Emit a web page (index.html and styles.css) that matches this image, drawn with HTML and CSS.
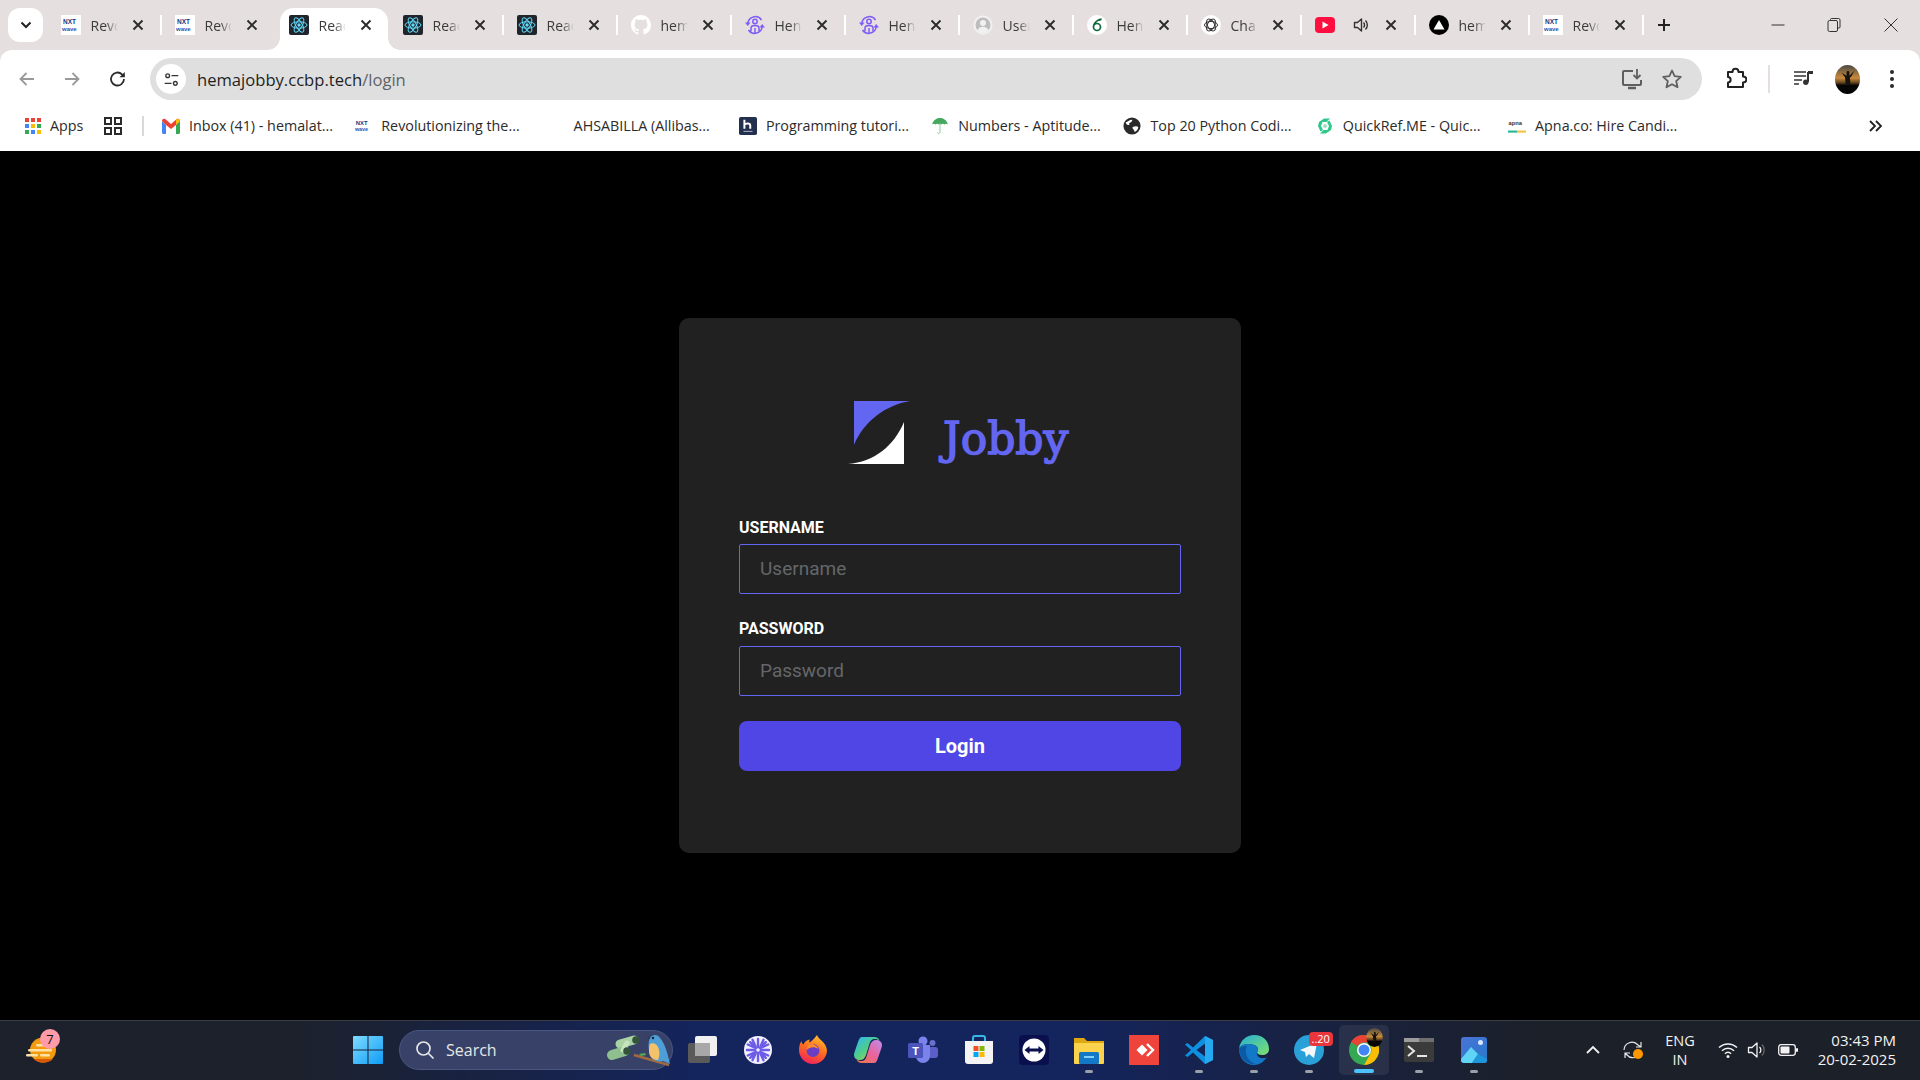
FILE: index.html
```html
<!DOCTYPE html>
<html lang="en">
<head>
<meta charset="utf-8">
<title>Jobby Login</title>
<link rel="stylesheet" href="styles.css">
</head>
<body>
<svg class="sprite" aria-hidden="true">
  <defs>
    <symbol id="i-close" viewBox="0 0 14 14"><path d="M2.500 2.500l9 9M11.500 2.500l-9 9" fill="none" stroke="#2b2b2b" stroke-width="1.900"/></symbol>
    <symbol id="i-nxt" viewBox="0 0 20 20"><rect width="20" height="20" fill="#fff"/><text x="2" y="9" font-family="Liberation Sans" font-weight="700" font-size="6.500" fill="#17387f">NXT</text><text x="1" y="15.500" font-family="Liberation Sans" font-weight="700" font-size="6" fill="#2456b8">wave</text></symbol>
    <symbol id="i-react" viewBox="0 0 20 20"><rect width="20" height="20" rx="2" fill="#20252b"/><g fill="none" stroke="#61dafb" stroke-width="1"><ellipse cx="10" cy="10" rx="8" ry="3.200"/><ellipse cx="10" cy="10" rx="8" ry="3.200" transform="rotate(60 10 10)"/><ellipse cx="10" cy="10" rx="8" ry="3.200" transform="rotate(120 10 10)"/></g><circle cx="10" cy="10" r="1.700" fill="#61dafb"/></symbol>
    <symbol id="i-github" viewBox="0 0 16 16"><path fill="#fff" d="M8 0C3.580 0 0 3.580 0 8c0 3.540 2.290 6.530 5.470 7.590.4.070.55-.17.55-.38 0-.19-.01-.82-.01-1.490-2.010.37-2.530-.49-2.690-.94-.09-.23-.48-.94-.82-1.130-.28-.15-.68-.52-.01-.53.63-.01 1.080.58 1.230.82.72 1.210 1.870.87 2.330.66.07-.52.28-.87.51-1.070-1.780-.2-3.640-.89-3.640-3.950 0-.87.31-1.590.82-2.150-.08-.2-.36-1.020.08-2.120 0 0 .67-.21 2.200.82.64-.18 1.320-.27 2-.27.68 0 1.360.09 2 .27 1.530-1.040 2.200-.82 2.200-.82.44 1.100.16 1.920.08 2.120.51.56.82 1.270.82 2.150 0 3.070-1.870 3.750-3.650 3.950.29.25.54.73.54 1.480 0 1.070-.01 1.930-.01 2.200 0 .21.15.46.55.38A8.013 8.013 0 0016 8c0-4.420-3.580-8-8-8z"/></symbol>
    <symbol id="i-hero" viewBox="0 0 20 20"><g fill="none" stroke="#7d5cf5" stroke-width="1.500"><path d="M2.800 8.500A7.500 7.500 0 0 1 16.500 5"/><path d="M17.200 11.500A7.500 7.500 0 0 1 3.500 15"/><circle cx="10" cy="6.500" r="2.200"/><path d="M6 16.500v-3.500c0-1.700 1.700-2.500 4-2.500s4 .8 4 2.500v3.500"/><path d="M10 13v5"/></g><path d="M0 7.500h5.500L2.800 11zM20 12.500h-5.500L17.200 9z" fill="#7d5cf5"/></symbol>
    <symbol id="i-user" viewBox="0 0 20 20"><circle cx="10" cy="10" r="9.500" fill="#f1f1f1"/><circle cx="10" cy="10" r="7.500" fill="#bdbdbd"/><circle cx="10" cy="8" r="3" fill="#f1f1f1"/><path d="M4.500 15.500c1-3 3-3.800 5.500-3.800s4.500.8 5.500 3.800a7.500 7.500 0 0 1-11 0z" fill="#f1f1f1"/></symbol>
    <symbol id="i-leaf" viewBox="0 0 20 20"><circle cx="10" cy="10" r="10" fill="#fff"/><path d="M11.500 5C8 7 6.500 9.500 6.500 12a3.500 3.500 0 1 0 3.500-3.500c-1 0-2 .4-2.800 1.200" fill="none" stroke="#0f6a3c" stroke-width="1.700"/><path d="M10 5.500c1.200-1.800 3-2.300 5-2-.3 2-2 3.300-5 2z" fill="#0f6a3c"/></symbol>
    <symbol id="i-gpt" viewBox="0 0 20 20"><circle cx="10" cy="10" r="10" fill="#fff"/><g fill="none" stroke="#333" stroke-width="1"><ellipse cx="10" cy="10" rx="6.500" ry="3.600"/><ellipse cx="10" cy="10" rx="6.500" ry="3.600" transform="rotate(60 10 10)"/><ellipse cx="10" cy="10" rx="6.500" ry="3.600" transform="rotate(120 10 10)"/></g></symbol>
    <symbol id="i-yt" viewBox="0 0 20 16"><rect width="20" height="16" rx="4" fill="#ff0f3f"/><path d="M7.500 4.500l6 3.500-6 3.500z" fill="#fff"/></symbol>
    <symbol id="i-audio" viewBox="0 0 16 16"><path d="M1.500 5.500h3l4-3.500v12l-4-3.500h-3z" fill="none" stroke="#333" stroke-width="1.400" stroke-linejoin="round"/><path d="M10.500 5.500a3.500 3.500 0 0 1 0 5M12.500 3.500a6.500 6.500 0 0 1 0 9" fill="none" stroke="#333" stroke-width="1.400"/></symbol>
    <symbol id="i-vercel" viewBox="0 0 20 20"><circle cx="10" cy="10" r="10" fill="#000"/><path d="M10 5l5.500 9.500h-11z" fill="#fff"/></symbol>

    <symbol id="i-gmail" viewBox="0 0 18 16"><path d="M0 3v11.500C0 15.300.7 16 1.500 16H4V7z" fill="#4285f4"/><path d="M14 7v9h2.500c.8 0 1.500-.7 1.500-1.500V3z" fill="#34a853"/><path d="M0 3l4 4 5 4 5-4 4-4C18 1 16 .2 14.800 1.100L9 6 3.200 1.100C2 .2 0 1 0 3z" fill="#ea4335"/><path d="M14 2v5l4-4c0-1.700-1.800-2.700-3.200-1.900z" fill="#fbbc04"/></symbol>
    <symbol id="i-hackr" viewBox="0 0 20 20"><rect width="20" height="20" rx="2" fill="#232f4e"/><path d="M6 3v10M6 8.500c1-1.500 6.500-2.500 6.500 1V13" fill="none" stroke="#fff" stroke-width="2.200"/><path d="M5 16h10" stroke="#aab" stroke-width="1.200"/></symbol>
    <symbol id="i-umbrella" viewBox="0 0 18 18"><path d="M1 7.500C2.500 2.500 6 1 9 1s6.500 1.500 8 6.500c-1-1-2.500-1-3.300 0-.9-1-2.600-1-3.500 0-.7-.7-1.700-.7-2.400 0-.9-1-2.600-1-3.500 0C3.500 6.500 2 6.500 1 7.500z" fill="#45a85c"/><path d="M9 6v9c0 2-2.500 2-2.500.3" fill="none" stroke="#8fcb9f" stroke-width="1"/></symbol>
    <symbol id="i-globe" viewBox="0 0 20 20"><circle cx="10" cy="10" r="9.500" fill="#2a2a2a"/><path d="M3 6c2-.5 4-3 7-3 1 1-1 3-2.500 3.500S8 9 6.500 9 3.500 8 3 6zM11 11c2-1 5-1 6 0 0 2.500-2 4.500-3.500 5.500-1 0-1-2-2-3s-1.500-2-.5-2.500z" fill="#fff"/></symbol>
    <symbol id="i-quick" viewBox="0 0 18 18"><path d="M3 5l5-3.500h6L10.500 5H6.500L5 9l2 4-2.500 1.500L2 9z" fill="#2fc78a"/><path d="M15 13l-5 3.500H4L7.500 13h4L13 9l-2-4 2.500-1.500L16 9z" fill="#2fc78a"/><circle cx="9" cy="9" r="2" fill="#9ee2c4"/></symbol>
    <symbol id="i-apna" viewBox="0 0 20 20"><text x="0.500" y="9" font-family="Liberation Sans" font-weight="700" font-size="6.400" fill="#333">apna</text><rect y="15" width="10" height="2.400" fill="#2bb793"/><rect x="10" y="15" width="10" height="2.400" fill="#f5c443"/></symbol>

    <symbol id="i-win" viewBox="0 0 30 30"><defs><linearGradient id="g-win" x1="0" y1="0" x2="1" y2="1"><stop offset="0" stop-color="#7fdcff"/><stop offset="1" stop-color="#0f9cf5"/></linearGradient></defs><path d="M1 1h13.500v13.500H0V2a1 1 0 0 1 1-1zM15.500 1H29a1 1 0 0 1 1 1v12.500H15.500zM0 15.500h14.500V29H1a1 1 0 0 1-1-1zM15.500 15.500H30V28a1 1 0 0 1-1 1H15.500z" fill="url(#g-win)"/></symbol>
    <symbol id="i-weather" viewBox="0 0 30 26"><ellipse cx="17" cy="13" rx="13" ry="12.500" fill="#f59a0c"/><path d="M8 22c4 5 14 5 19 0z" fill="#d9590a"/><g fill="#fbe3a8"><rect x="10" y="7" width="18" height="2.500" rx="1.200"/><rect x="2" y="12" width="24" height="2.500" rx="1.200"/><rect x="0" y="17" width="12" height="2.500" rx="1.200"/><rect x="14" y="17" width="10" height="2.500" rx="1.200"/></g></symbol>
    <symbol id="i-bird" viewBox="0 0 70 36"><g fill="none" stroke-linecap="round"><path d="M31 8L17 12" stroke="#a9d3a4" stroke-width="9"/><path d="M22 19L9 23" stroke="#8fbf8e" stroke-width="10"/><path d="M24 11L20 18" stroke="#c6e4c0" stroke-width="5"/></g><circle cx="33" cy="8" r="3.800" fill="#34523c"/><circle cx="24" cy="19" r="3.800" fill="#34523c"/><path d="M31 23l35 10" stroke="#a4683f" stroke-width="2.500"/><path d="M36 22l6-1 1 2-5 1z" fill="#4caf50"/><path d="M47 6c2-4 8-4 10 0 5 5 8 17 10 26l-7-3c-7 2-13-2-14-10-.5-4-1-9 1-13z" fill="#4d9ed6"/><path d="M47 12c4-2 8 1 9 6 1 4 0 8-1 10-5 0-9-3-9-9 0-3 0-5 1-7z" fill="#f3c26b"/><circle cx="50" cy="6" r="1.200" fill="#10202c"/><path d="M47 5l-4 1 4 1z" fill="#2b3b44"/></symbol>
    <symbol id="i-taskview" viewBox="0 0 30 30"><rect y="8" width="22" height="20" rx="2" fill="#5a5a5a"/><rect x="7" y="1" width="22" height="20" rx="2" fill="#f1f1f1"/><rect x="7" y="8" width="15" height="13" fill="#a8a8a8"/></symbol>
    <symbol id="i-flower" viewBox="0 0 30 30"><circle cx="15" cy="15" r="14" fill="#f3f0ff"/><g stroke="#6c5ce7" stroke-width="2.400" stroke-linecap="round"><path d="M15 4v7M15 19v7M4 15h7M19 15h7M7.200 7.200l5 5M17.800 17.800l5 5M22.800 7.200l-5 5M12.200 17.800l-5 5M9.500 4.800l3 6.500M17.500 18.700l3 6.500M20.500 4.800l-3 6.500M12.500 18.700l-3 6.500M4.800 9.500l6.500 3M18.700 17.500l6.500 3M25.200 9.500l-6.500 3M11.300 17.500l-6.500 3"/></g><circle cx="15" cy="15" r="3.500" fill="#6c5ce7"/><circle cx="15" cy="15" r="1.800" fill="#f3f0ff"/></symbol>
    <symbol id="i-firefox" viewBox="0 0 30 30"><defs><linearGradient id="g-ff" x1="0.700" y1="0" x2="0.300" y2="1"><stop offset="0" stop-color="#ffbd2e"/><stop offset="0.500" stop-color="#ff6a1f"/><stop offset="1" stop-color="#f0205f"/></linearGradient></defs><path d="M19 0c1 4 9 7 10 15a14 14 0 1 1-28 0C1 11 2 8 3.500 6c0 2 1 3 2 3.500C7 6 9 5 12 4.500c-1 1.500-1 2.500-.5 3 2-1 4-3 7.500-7.500z" fill="url(#g-ff)"/><circle cx="15" cy="15.500" r="6.500" fill="#6a3fc4"/><path d="M8.500 15c3-3 8-4 12-1-1-3-4-5-7-5s-5 3-5 6z" fill="#ff8a2b"/></symbol>
    <symbol id="i-copilot" viewBox="0 0 30 30"><defs><linearGradient id="g-co1" x1="0" y1="0" x2="1" y2="1"><stop offset="0" stop-color="#2fb5ff"/><stop offset="0.500" stop-color="#4fcf84"/><stop offset="1" stop-color="#f6c944"/></linearGradient><linearGradient id="g-co2" x1="1" y1="0" x2="0" y2="1"><stop offset="0" stop-color="#c08cf0"/><stop offset="0.500" stop-color="#e8649a"/><stop offset="1" stop-color="#f07a3a"/></linearGradient></defs><path d="M9 2h12c3 0 5 1.500 5.500 4-1-1.500-3-2-5-2-2.500 0-4 1.500-5 4.500L13 20c-1 3-3 5-6 5-3.500 0-6-2-6-5 0-1 .2-2 .6-3L5 7c1-3 2-5 4-5z" fill="url(#g-co1)"/><path d="M21 28H9c-3 0-5-1.500-5.500-4 1 1.500 3 2 5 2 2.500 0 4-1.500 5-4.500L17 10c1-3 3-5 6-5 3.500 0 6 2 6 5 0 1-.2 2-.6 3L25 23c-1 3-2 5-4 5z" fill="url(#g-co2)"/></symbol>
    <symbol id="i-teams" viewBox="0 0 30 30"><circle cx="24.500" cy="8" r="3" fill="#6a6fd0"/><rect x="20" y="12" width="10" height="11" rx="3" fill="#5b5fc7"/><circle cx="15" cy="6" r="4.500" fill="#7b83eb"/><path d="M8 10h14v11a7 7 0 0 1-14 0z" fill="#7b83eb"/><rect y="8" width="15" height="15" rx="1.500" fill="#4b53bc"/><text x="7.500" y="20" text-anchor="middle" font-family="Liberation Sans" font-weight="700" font-size="11" fill="#fff">T</text></symbol>
    <symbol id="i-store" viewBox="0 0 30 30"><path d="M9 6V3c0-1 1-2 2-2h8c1 0 2 1 2 2v3" fill="none" stroke="#35b8e8" stroke-width="2"/><path d="M1 6h28v20a3 3 0 0 1-3 3H4a3 3 0 0 1-3-3z" fill="#f4f4f4"/><rect x="9.500" y="11" width="5" height="5" fill="#f25022"/><rect x="15.500" y="11" width="5" height="5" fill="#7fba00"/><rect x="9.500" y="17" width="5" height="5" fill="#00a4ef"/><rect x="15.500" y="17" width="5" height="5" fill="#ffb900"/></symbol>
    <symbol id="i-tv" viewBox="0 0 30 30"><rect width="30" height="30" rx="4" fill="#0a0f4e"/><circle cx="15" cy="15" r="11.500" fill="#fff"/><path d="M5.500 15l5-4v2.500h9V11l5 4-5 4v-2.500h-9V19z" fill="#0a0f4e"/></symbol>
    <symbol id="i-folder" viewBox="0 0 30 30"><path d="M0 3h10l3 3h17v22H0z" fill="#e0a80f"/><path d="M0 8h30v20a1 1 0 0 1-1 1H1a1 1 0 0 1-1-1z" fill="#fcd34d"/><rect x="5" y="17" width="20" height="12" rx="1.500" fill="#1478c8"/><rect x="10" y="21" width="10" height="2" fill="#7fd0ff"/></symbol>
    <symbol id="i-anydesk" viewBox="0 0 30 30"><rect width="30" height="30" fill="#ef443b"/><path d="M13 9.500l5.500 5.500-5.500 5.500L7.500 15z" fill="#fff"/><path d="M18 9l6 6-6 6" fill="none" stroke="#fff" stroke-width="2.400"/></symbol>
    <symbol id="i-vscode" viewBox="0 0 30 30"><path d="M21 1l8 4v20l-8 4-12-11.500L3.500 22 1 20.500 7 15 1 9.500 3.500 8 9 12.500z" fill="#0e8fe0"/><path d="M21 8.500L12.500 15l8.500 6.500z" fill="#132458"/><path d="M21 1l8 4v20l-8 4z" fill="#26a9f0"/></symbol>
    <symbol id="i-edge" viewBox="0 0 30 30"><defs><linearGradient id="g-ed" x1="0" y1="0" x2="1" y2="1"><stop offset="0" stop-color="#24b0d8"/><stop offset="1" stop-color="#7ee06a"/></linearGradient></defs><path d="M0 14C1 5 8 0 15 0c9 0 15 6 15 14 0 4-3 6-7 6-3 0-5-1-5-3 2-2 1-6-3-7C9 8 2 9 0 14z" fill="url(#g-ed)"/><path d="M0 14c2-5 9-6 15-4 4 1 5 5 3 7-1 3 2 7 7 6 1 0 2 0 3-1-3 5-8 8-13 8C6 30 0 23 0 14z" fill="#1478c8"/><path d="M8 11c-3 5-1 14 8 18-5 1-15-3-16-15 1-2 4-3 8-3z" fill="#0c59a4"/></symbol>
    <symbol id="i-telegram" viewBox="0 0 30 30"><circle cx="15" cy="15" r="15" fill="#2aa0d8"/><path d="M6 15l17-7-3 15-5-4-3 3-1-5z" fill="#f2f8fc"/></symbol>
    <symbol id="i-chrome" viewBox="0 0 30 30"><circle cx="15" cy="15" r="15" fill="#34a853"/><path d="M15 0a15 15 0 0 1 13 7.500H15a7.500 7.500 0 0 0-6.500 3.700L2 7A15 15 0 0 1 15 0z" fill="#ea4335"/><path d="M28 7.500A15 15 0 0 1 15 30l6.500-11.300A7.500 7.500 0 0 0 21.500 11z" fill="#fbbc04"/><circle cx="15" cy="15" r="7" fill="#fff"/><circle cx="15" cy="15" r="5.500" fill="#4285f4"/></symbol>
    <symbol id="i-terminal" viewBox="0 0 30 24"><rect width="30" height="24" rx="2" fill="#3b3b3b"/><rect width="30" height="4" fill="#9c9c9c"/><rect x="15" width="15" height="4" fill="#6f6f6f"/><path d="M4 8l6 5-6 5" fill="none" stroke="#e6e6e6" stroke-width="2"/><rect x="13" y="17" width="10" height="2" fill="#e6e6e6"/></symbol>
    <symbol id="i-photos" viewBox="0 0 26 26"><defs><linearGradient id="g-ph" x1="0" y1="0" x2="1" y2="1"><stop offset="0" stop-color="#4a74d8"/><stop offset="1" stop-color="#2878c8"/></linearGradient></defs><rect width="26" height="26" rx="3" fill="url(#g-ph)"/><path d="M0 22L10 10l7 7-6 9H3a3 3 0 0 1-3-4z" fill="#5fd4f5"/><path d="M11 26l6-9 9 5v1a3 3 0 0 1-3 3z" fill="#1e96dc"/><circle cx="19.500" cy="5.500" r="2.500" fill="#d8e6ff"/></symbol>
    <symbol id="i-avatar" viewBox="0 0 26 30"><defs><linearGradient id="g-av" x1="0" y1="0" x2="0" y2="1"><stop offset="0" stop-color="#4a4a44"/><stop offset="0.450" stop-color="#c88a3c"/><stop offset="0.600" stop-color="#6b4a20"/><stop offset="0.700" stop-color="#050505"/></linearGradient></defs><ellipse cx="13" cy="15" rx="13" ry="15" fill="url(#g-av)"/><path d="M7 8l5 3V7l1.500-1L15 7v4l5-5-3 6-1.500 1 .5 7h-5l-.5-7z" fill="#161210"/></symbol>
  </defs>
</svg>

<header class="chrome">
  <div class="tabstrip">
    <button class="tab-menu"><svg class="ico-16" viewBox="0 0 16 16"><path d="M3.500 5.500L8 10l4.500-4.500" fill="none" stroke="#222" stroke-width="2"/></svg></button>
    <div class="tabs">
      <div class="tab"><svg class="favicon"><use href="#i-nxt"/></svg><span class="tab-label">Revo</span><svg class="tab-x"><use href="#i-close"/></svg></div>
      <div class="tab no-sep"><svg class="favicon"><use href="#i-nxt"/></svg><span class="tab-label">Revo</span><svg class="tab-x"><use href="#i-close"/></svg></div>
      <div class="tab active"><svg class="favicon"><use href="#i-react"/></svg><span class="tab-label">Reac</span><svg class="tab-x"><use href="#i-close"/></svg></div>
      <div class="tab"><svg class="favicon"><use href="#i-react"/></svg><span class="tab-label">Reac</span><svg class="tab-x"><use href="#i-close"/></svg></div>
      <div class="tab"><svg class="favicon"><use href="#i-react"/></svg><span class="tab-label">Reac</span><svg class="tab-x"><use href="#i-close"/></svg></div>
      <div class="tab"><svg class="favicon"><use href="#i-github"/></svg><span class="tab-label">hem</span><svg class="tab-x"><use href="#i-close"/></svg></div>
      <div class="tab"><svg class="favicon"><use href="#i-hero"/></svg><span class="tab-label">Hen</span><svg class="tab-x"><use href="#i-close"/></svg></div>
      <div class="tab"><svg class="favicon"><use href="#i-hero"/></svg><span class="tab-label">Hen</span><svg class="tab-x"><use href="#i-close"/></svg></div>
      <div class="tab"><svg class="favicon"><use href="#i-user"/></svg><span class="tab-label">User</span><svg class="tab-x"><use href="#i-close"/></svg></div>
      <div class="tab"><svg class="favicon"><use href="#i-leaf"/></svg><span class="tab-label">Hen</span><svg class="tab-x"><use href="#i-close"/></svg></div>
      <div class="tab"><svg class="favicon"><use href="#i-gpt"/></svg><span class="tab-label">Cha</span><svg class="tab-x"><use href="#i-close"/></svg></div>
      <div class="tab"><svg class="favicon"><use href="#i-yt"/></svg><svg class="tab-audio"><use href="#i-audio"/></svg><svg class="tab-x"><use href="#i-close"/></svg></div>
      <div class="tab"><svg class="favicon"><use href="#i-vercel"/></svg><span class="tab-label">hem</span><svg class="tab-x"><use href="#i-close"/></svg></div>
      <div class="tab"><svg class="favicon"><use href="#i-nxt"/></svg><span class="tab-label">Revo</span><svg class="tab-x"><use href="#i-close"/></svg></div>
    </div>
    <div class="new-tab"><svg class="ico-16" viewBox="0 0 16 16"><path d="M8 2v12M2 8h12" stroke="#222" stroke-width="2"/></svg></div>
    <div class="win-controls">
      <div class="win-btn"><svg class="ico-16" viewBox="0 0 16 16"><path d="M1.500 8h13" stroke="#333" stroke-width="1"/></svg></div>
      <div class="win-btn"><svg class="ico-16" viewBox="0 0 16 16"><path d="M4.500 3.500V2.500a1 1 0 0 1 1-1h7a1.500 1.500 0 0 1 1.500 1.500v7a1 1 0 0 1-1 1h-1" fill="none" stroke="#333"/><rect x="2" y="3.500" width="9.500" height="11" rx="1.500" fill="none" stroke="#333"/></svg></div>
      <div class="win-btn win-close"><svg class="ico-16" viewBox="0 0 16 16"><path d="M1.500 1.500l13 13M14.500 1.500l-13 13" stroke="#333"/></svg></div>
    </div>
  </div>

  <div class="toolbar">
    <div class="nav-btn"><svg class="ico-20" viewBox="0 0 20 20"><path d="M17 10H4M9.500 4L3.500 10l6 6" fill="none" stroke="#9a9a9a" stroke-width="1.800"/></svg></div>
    <div class="nav-btn"><svg class="ico-20" viewBox="0 0 20 20"><path d="M3 10h13M10.500 4l6 6-6 6" fill="none" stroke="#9a9a9a" stroke-width="1.800"/></svg></div>
    <div class="nav-btn"><svg class="ico-20" viewBox="0 0 20 20"><path d="M16 10a6.500 6.500 0 1 1-2-4.700L16 7.500" fill="none" stroke="#2b2b2b" stroke-width="1.800"/><path d="M16.800 3v5.300h-5.300z" fill="#2b2b2b"/></svg></div>
    <div class="omnibox">
      <div class="site-info"><svg class="ico-20" viewBox="0 0 20 20"><g fill="none" stroke="#333" stroke-width="1.600"><circle cx="5.500" cy="5.500" r="2.200"/><path d="M10 5.500h8M2 14.500h8"/><circle cx="14.500" cy="14.500" r="2.200"/></g></svg></div>
      <div class="url"><span class="url-host">hemajobby.ccbp.tech</span><span class="url-path">/login</span></div>
      <div class="omni-btn"><svg class="ico-22" viewBox="0 0 22 22"><path d="M12 3H3a1 1 0 0 0-1 1v12a1 1 0 0 0 1 1h16a1 1 0 0 0 1-1v-4" fill="none" stroke="#5f5f5f" stroke-width="2"/><path d="M7 20h8" stroke="#5f5f5f" stroke-width="2.500"/><path d="M16 1v9M12.500 7l3.500 3.500L19.500 7" fill="none" stroke="#5f5f5f" stroke-width="1.800"/></svg></div>
      <div class="omni-btn"><svg class="ico-22" viewBox="0 0 22 22"><path d="M11 2.500l2.600 5.700 6.200.7-4.600 4.200 1.300 6.100L11 16.200l-5.500 3 1.300-6.100-4.600-4.200 6.200-.7z" fill="none" stroke="#5f5f5f" stroke-width="1.800" stroke-linejoin="round"/></svg></div>
    </div>
    <div class="tool-btn ext"><svg class="ico-22" viewBox="0 0 22 22"><path d="M3 5h4.500c0-4.500 6-4.500 6 0H18v4.500c4.500 0 4.500 6 0 6V20H3v-4.500c3.500 0 3.500-5.500 0-5.500z" fill="none" stroke="#222" stroke-width="2" stroke-linejoin="round"/></svg></div>
    <div class="tool-sep"></div>
    <div class="tool-btn"><svg class="media-ico" viewBox="0 0 19 14"><path d="M0 1h12M0 5h12M0 9h8M0 13h5" stroke="#333" stroke-width="1.700"/><path d="M14 1v10" stroke="#333" stroke-width="2"/><path d="M14 0h5v3h-5z" fill="#333"/><circle cx="11.800" cy="11.300" r="2.700" fill="#333"/></svg></div>
    <div class="tool-btn"><svg class="avatar"><use href="#i-avatar"/></svg></div>
    <div class="tool-btn kebab"><svg class="ico-20" viewBox="0 0 20 20"><g fill="#2b2b2b"><circle cx="10" cy="3" r="2"/><circle cx="10" cy="10" r="2"/><circle cx="10" cy="17" r="2"/></g></svg></div>
  </div>

  <div class="bookmarks">
    <div class="bm-apps"><svg class="bm-ico" viewBox="0 0 16 16"><g><rect width="4" height="4" fill="#ea4335"/><rect x="6" width="4" height="4" fill="#ea4335"/><rect x="12" width="4" height="4" fill="#ea4335"/><rect y="6" width="4" height="4" fill="#4285f4"/><rect x="6" y="6" width="4" height="4" fill="#fbbc04"/><rect x="12" y="6" width="4" height="4" fill="#34a853"/><rect y="12" width="4" height="4" fill="#34a853"/><rect x="6" y="12" width="4" height="4" fill="#4285f4"/><rect x="12" y="12" width="4" height="4" fill="#fbbc04"/></g></svg><span>Apps</span></div>
    <div class="bm-grid"><svg class="ico-18" viewBox="0 0 18 18"><g fill="none" stroke="#2b2b2b" stroke-width="2"><rect x="1" y="1" width="6" height="6"/><rect x="11" y="1" width="6" height="6"/><rect x="1" y="11" width="6" height="6"/><rect x="11" y="11" width="6" height="6"/></g></svg></div>
    <div class="bm-sep"></div>
    <div class="bm"><svg class="bm-fav"><use href="#i-gmail"/></svg><span>Inbox (41) - hemalat...</span></div>
    <div class="bm"><svg class="bm-fav"><use href="#i-nxt"/></svg><span>Revolutionizing the...</span></div>
    <div class="bm"><span class="bm-fav"></span><span>AHSABILLA (Allibas...</span></div>
    <div class="bm"><svg class="bm-fav"><use href="#i-hackr"/></svg><span>Programming tutori...</span></div>
    <div class="bm"><svg class="bm-fav"><use href="#i-umbrella"/></svg><span>Numbers - Aptitude...</span></div>
    <div class="bm"><svg class="bm-fav"><use href="#i-globe"/></svg><span>Top 20 Python Codi...</span></div>
    <div class="bm"><svg class="bm-fav"><use href="#i-quick"/></svg><span>QuickRef.ME - Quic...</span></div>
    <div class="bm"><svg class="bm-fav"><use href="#i-apna"/></svg><span>Apna.co: Hire Candi...</span></div>
    <div class="bm-more"><svg class="ico-16" viewBox="0 0 16 16"><path d="M3 3l5 5-5 5M9 3l5 5-5 5" fill="none" stroke="#222" stroke-width="1.800"/></svg></div>
  </div>
</header>

<main class="page">
  <form class="card">
    <div class="logo">
      <svg class="logo-mark" viewBox="0 0 62 63"><path d="M6 0h56C38 4 16 20 6 44z" fill="#6366f1"/><path d="M56 21v42H0c26-2 46-18 56-42z" fill="#fff"/></svg>
      <span class="logo-text">Jobby</span>
    </div>
    <label class="field-label">USERNAME</label>
    <input class="field-input" type="text" placeholder="Username">
    <label class="field-label second">PASSWORD</label>
    <input class="field-input" type="password" placeholder="Password">
    <button class="login-btn" type="button">Login</button>
  </form>
</main>

<footer class="taskbar">
  <div class="tb-left">
    <div class="weather"><svg class="weather-ico"><use href="#i-weather"/></svg><span class="weather-badge">7</span></div>
  </div>
  <div class="tb-win"><svg class="ico-30"><use href="#i-win"/></svg></div>
  <div class="search">
    <svg class="search-ico" viewBox="0 0 20 20"><circle cx="8.500" cy="8.500" r="6.500" fill="none" stroke="#e6e6e6" stroke-width="1.700"/><path d="M13.500 13.500l5 5" stroke="#e6e6e6" stroke-width="1.700"/></svg>
    <span class="search-text">Search</span>
    <svg class="search-art"><use href="#i-bird"/></svg>
  </div>
  <div class="apps">
    <div class="app"><svg class="ico-30"><use href="#i-taskview"/></svg></div>
    <div class="app"><svg class="ico-30"><use href="#i-flower"/></svg></div>
    <div class="app"><svg class="ico-30"><use href="#i-firefox"/></svg></div>
    <div class="app"><svg class="ico-30"><use href="#i-copilot"/></svg></div>
    <div class="app"><svg class="ico-30"><use href="#i-teams"/></svg></div>
    <div class="app"><svg class="ico-30"><use href="#i-store"/></svg></div>
    <div class="app"><svg class="ico-30"><use href="#i-tv"/></svg></div>
    <div class="app open"><svg class="ico-30"><use href="#i-folder"/></svg></div>
    <div class="app"><svg class="ico-30"><use href="#i-anydesk"/></svg></div>
    <div class="app open"><svg class="ico-30"><use href="#i-vscode"/></svg></div>
    <div class="app open"><svg class="ico-30"><use href="#i-edge"/></svg></div>
    <div class="app open"><svg class="ico-30"><use href="#i-telegram"/></svg><span class="tg-badge">..20</span></div>
    <div class="app active"><svg class="ico-30"><use href="#i-chrome"/></svg><svg class="chrome-badge"><use href="#i-avatar"/></svg></div>
    <div class="app open"><svg class="ico-30"><use href="#i-terminal"/></svg></div>
    <div class="app open"><svg class="ico-26"><use href="#i-photos"/></svg></div>
  </div>
  <div class="tray">
    <div class="tray-chevron"><svg class="ico-16" viewBox="0 0 16 16"><path d="M2 11l6-6 6 6" fill="none" stroke="#f2f2f2" stroke-width="1.800"/></svg></div>
    <div class="tray-sync"><svg class="ico-22" viewBox="0 0 22 22"><path d="M2 11a8 8 0 0 1 14-5l3 2M19 3v5h-5M17 16l-1 1a8 8 0 0 1-11-1l-2-2M3 19v-5h5" fill="none" stroke="#e8e8e8" stroke-width="1.200"/><circle cx="16" cy="15" r="5" fill="#ff9800"/></svg></div>
    <div class="tray-lang"><span>ENG</span><span>IN</span></div>
    <div class="tray-ico wifi"><svg class="ico-20" viewBox="0 0 20 20"><g fill="none" stroke="#f2f2f2" stroke-width="1.500"><path d="M1 7.500a13 13 0 0 1 18 0M4 10.700a8.500 8.500 0 0 1 12 0M7 13.700a4 4 0 0 1 6 0"/></g><circle cx="10" cy="16.500" r="1.500" fill="#f2f2f2"/></svg></div>
    <div class="tray-ico vol"><svg class="ico-20" viewBox="0 0 20 20"><path d="M1.500 7.500h3.500l5-4.500v14l-5-4.500H1.500z" fill="none" stroke="#f2f2f2" stroke-width="1.300" stroke-linejoin="round"/><path d="M12.500 7a4 4 0 0 1 0 6" fill="none" stroke="#f2f2f2" stroke-width="1.300"/><path d="M15 4.500a8 8 0 0 1 0 11" fill="none" stroke="#666" stroke-width="1.300"/></svg></div>
    <div class="tray-ico batt"><svg class="ico-20" viewBox="0 0 20 20"><rect x="0.700" y="4.700" width="16.600" height="10.600" rx="2.500" fill="none" stroke="#f2f2f2" stroke-width="1.300"/><rect x="2.500" y="6.500" width="9" height="7" rx="1" fill="#f2f2f2"/><rect x="18" y="8" width="2" height="4" rx="1" fill="#f2f2f2"/></svg></div>
    <div class="clock"><span>03:43 PM</span><span>20-02-2025</span></div>
  </div>
</footer>
</body>
</html>
```

FILE: styles.css
```css
* { box-sizing: border-box; }
html, body { height: 100%; }
body {
  margin: 0;
  height: 1080px;
  display: flex;
  flex-direction: column;
  overflow: hidden;
  background: #000;
  font-family: "Open Sans", "Liberation Sans", sans-serif;
}
.sprite { width: 0; height: 0; position: absolute; }
.ico-16 { width: 16px; height: 16px; display: block; }
.ico-18 { width: 18px; height: 18px; display: block; }
.ico-20 { width: 20px; height: 20px; display: block; }
.ico-22 { width: 22px; height: 22px; display: block; }
.ico-26 { width: 26px; height: 26px; display: block; }
.ico-30 { width: 30px; height: 30px; display: block; }

/* browser chrome */
.chrome { flex: none; background: #e6dfe0; }
.tabstrip { height: 50px; display: flex; padding-left: 8px; }
.tab-menu {
  flex: none; width: 35px; height: 34px; margin: 8px 4px 0 0; padding: 0;
  border: 0; border-radius: 12px; background: #fff;
  display: flex; align-items: center; justify-content: center;
}
.tabs { display: flex; flex: none; }
.tab {
  position: relative; flex: none; width: 114px; height: 50px;
  display: flex; align-items: center; padding-left: 13.500px;
}
.tab::after {
  content: ""; position: absolute; right: -1px; top: 15px;
  width: 2px; height: 20px; background: #fff;
}
.tab.no-sep::after { display: none; }
.tab.active::before {
  content: ""; position: absolute; left: 5px; right: 1px; top: 8px; bottom: 0;
  background: #fff; border-radius: 14px 14px 0 0;
}
.tab.active::after {
  left: -7px; right: -11px; top: auto; bottom: 0; width: auto; height: 12px;
  background:
    radial-gradient(circle at 0 0, transparent 11.500px, #fff 12px) left bottom / 12px 12px no-repeat,
    radial-gradient(circle at 100% 0, transparent 11.500px, #fff 12px) right bottom / 12px 12px no-repeat;
}
.tab.active > * { position: relative; }
.favicon { width: 20px; height: 20px; flex: none; }
.tab-label {
  width: 30px; margin-left: 10px; white-space: nowrap;
  font-size: 14px; color: #3a3a3a;
  -webkit-mask-image: linear-gradient(90deg, #000 50%, transparent 90%);
  mask-image: linear-gradient(90deg, #000 50%, transparent 90%);
}
.tab-x { width: 14px; height: 14px; flex: none; margin-left: 10.500px; }
.tab-audio { width: 16px; height: 16px; margin-left: 18px; flex: none; }
.tab-audio + .tab-x { margin-left: 15.500px; }
.new-tab { flex: none; width: 44px; margin-left: -1px; display: flex; align-items: center; justify-content: center; }
.win-controls { margin-left: auto; display: flex; }
.win-btn { width: 56px; display: flex; align-items: center; justify-content: center; }
.win-close { width: 58px; }

.toolbar {
  height: 50px; padding: 8px 6px 0 4px; background: #fff;
  border-radius: 12px 12px 0 0; display: flex; align-items: center;
}
.nav-btn { flex: none; width: 45.500px; display: flex; justify-content: center; }
.omnibox {
  flex: none; width: 1552px; height: 42px; margin-left: 9.500px; padding: 0 10px 0 6px;
  border-radius: 21px; background: #dfdfdf; display: flex; align-items: center;
}
.site-info {
  flex: none; width: 30px; height: 30px; border-radius: 50%; background: #fff;
  display: flex; align-items: center; justify-content: center;
}
.site-info .ico-20 { width: 17px; height: 17px; }
.url { flex: 1; margin-left: 11px; font-size: 16.600px; white-space: nowrap; }
.url-host { color: #1f1f1f; }
.url-path { color: #5f6368; }
.omni-btn { flex: none; width: 40px; display: flex; justify-content: center; }
.tool-btn { flex: none; width: 44px; display: flex; justify-content: center; align-items: center; }
.ext { margin-left: 12px; margin-top: -2px; }
.tool-sep { flex: none; width: 2px; height: 28px; margin: 0 11px 0 10px; background: #e6dfe0; }
.media-ico { width: 19px; height: 14px; margin-top: -3px; }
.avatar { width: 25px; height: 29px; }
.kebab { margin-left: 1px; }

.bookmarks { height: 51px; padding-left: 25px; background: #fff; display: flex; align-items: center; font-size: 14.300px; color: #2b2b2b; }
.bm-apps { flex: none; width: 79px; display: flex; align-items: center; gap: 9px; }
.bm-ico { width: 16px; height: 16px; flex: none; }
.bm-grid { flex: none; width: 38px; }
.bm-sep { flex: none; width: 2px; height: 20px; background: #d9d9d9; margin-right: 18px; }
.bm { flex: none; width: 192.300px; display: flex; align-items: center; gap: 9px; white-space: nowrap; }
.bm-fav { width: 18px; height: 18px; flex: none; }
.bm-more { margin-left: auto; margin-right: 37px; }

/* page */
.page { flex: 1; min-height: 0; background: #000; display: flex; align-items: center; justify-content: center; }
.card {
  width: 562px; padding: 83px 60px 82px; background: #212121; border-radius: 10px;
  display: flex; flex-direction: column;
}
.logo { display: flex; align-items: flex-start; gap: 33px; height: 63px; margin: 0 0 54px 109px; }
.logo-mark { width: 62px; height: 63px; flex: none; }
.logo-text {
  font-family: "DejaVu Serif", serif; font-weight: 400; font-size: 44px; line-height: 52px;
  margin-top: 12px; -webkit-text-stroke: 1.500px #6366f1; color: #6366f1;
}
.field-label {
  font-family: Roboto, sans-serif; font-weight: 700; font-size: 16px; line-height: 20px;
  color: #fff; margin-bottom: 6px;
}
.field-label.second { margin-top: 25px; margin-bottom: 7px; }
.field-input {
  width: 100%; height: 50px; padding: 0 20px 2px; background: transparent; outline: 0;
  border: 1px solid #6366f1; border-radius: 2px;
  font-family: Roboto, sans-serif; font-size: 19px; color: #fff;
}
.field-input::placeholder { color: #64676a; opacity: 1; }
.login-btn {
  height: 50px; margin-top: 25px; border: 0; border-radius: 8px; background: #4f46e5; color: #fff;
  font-family: Roboto, sans-serif; font-weight: 700; font-size: 20px;
}

/* taskbar */
.taskbar {
  flex: none; height: 60px; padding-bottom: 1px; display: flex; align-items: center; color: #f2f2f2;
  border-top: 1px solid #3a3d44;
  background: linear-gradient(90deg, #1c212b 0%, #1c212b 15%, #14245c 36%, #14245c 56%, #1c2029 80%, #1c2029 100%);
}
.tb-left { flex: none; width: 340px; padding-left: 26px; }
.weather { position: relative; width: 30px; height: 26px; }
.weather-ico { width: 30px; height: 26px; display: block; }
.weather-badge {
  position: absolute; left: 14px; top: -8px; width: 20px; height: 20px; border-radius: 50%;
  background: #ff9aa8; color: #111; font-size: 13px; line-height: 20px; text-align: center;
}
.tb-win { flex: none; width: 55px; display: flex; justify-content: center; }
.search {
  flex: none; width: 274px; height: 40px; margin-left: 4px; padding-left: 15px;
  border: 1px solid #4a5680; border-radius: 20px; background: #384269;
  display: flex; align-items: center;
}
.search-ico { width: 20px; height: 20px; flex: none; }
.search-text { margin-left: 11px; font-size: 16px; color: #e6e6e6; }
.search-art { width: 70px; height: 36px; margin-left: auto; margin-right: -1px; }
.apps { flex: none; display: flex; margin-left: 2.500px; }
.app { position: relative; flex: none; width: 55.100px; height: 50px; display: flex; align-items: center; justify-content: center; }
.app.open::after {
  content: ""; position: absolute; left: 50%; bottom: 2px; width: 8px; height: 3px; margin-left: -4px;
  border-radius: 2px; background: #9aa0a8;
}
.app.active { background: rgba(255, 255, 255, 0.07); border-radius: 5px; width: 50px; margin: 0 2.500px; }
.app.active::after {
  content: ""; position: absolute; left: 50%; bottom: 2px; width: 20px; height: 4px; margin-left: -10px;
  border-radius: 2px; background: #4cc2ff;
}
.chrome-badge { position: absolute; left: 26px; top: 3px; width: 19px; height: 19px; }
.tg-badge {
  position: absolute; left: 27px; top: 7px; height: 14px; padding: 0 3px; border-radius: 4px;
  background: #e8363c; color: #fff; font-size: 11px; line-height: 14px;
}
.tray { flex: none; width: 323px; margin-left: auto; margin-right: 24px; display: flex; align-items: center; }
.tray-chevron { flex: none; width: 40px; display: flex; justify-content: center; }
.tray-sync { flex: none; width: 40px; display: flex; justify-content: center; }
.tray-lang { flex: none; width: 54px; display: flex; flex-direction: column; align-items: center; font-size: 14.500px; line-height: 19px; }
.tray-ico { flex: none; display: flex; justify-content: center; }
.wifi { width: 30px; margin-left: 6px; }
.vol { width: 28px; }
.batt { width: 34px; }
.clock { margin-left: auto; display: flex; flex-direction: column; align-items: flex-end; font-size: 15px; line-height: 19px; white-space: nowrap; }
```
